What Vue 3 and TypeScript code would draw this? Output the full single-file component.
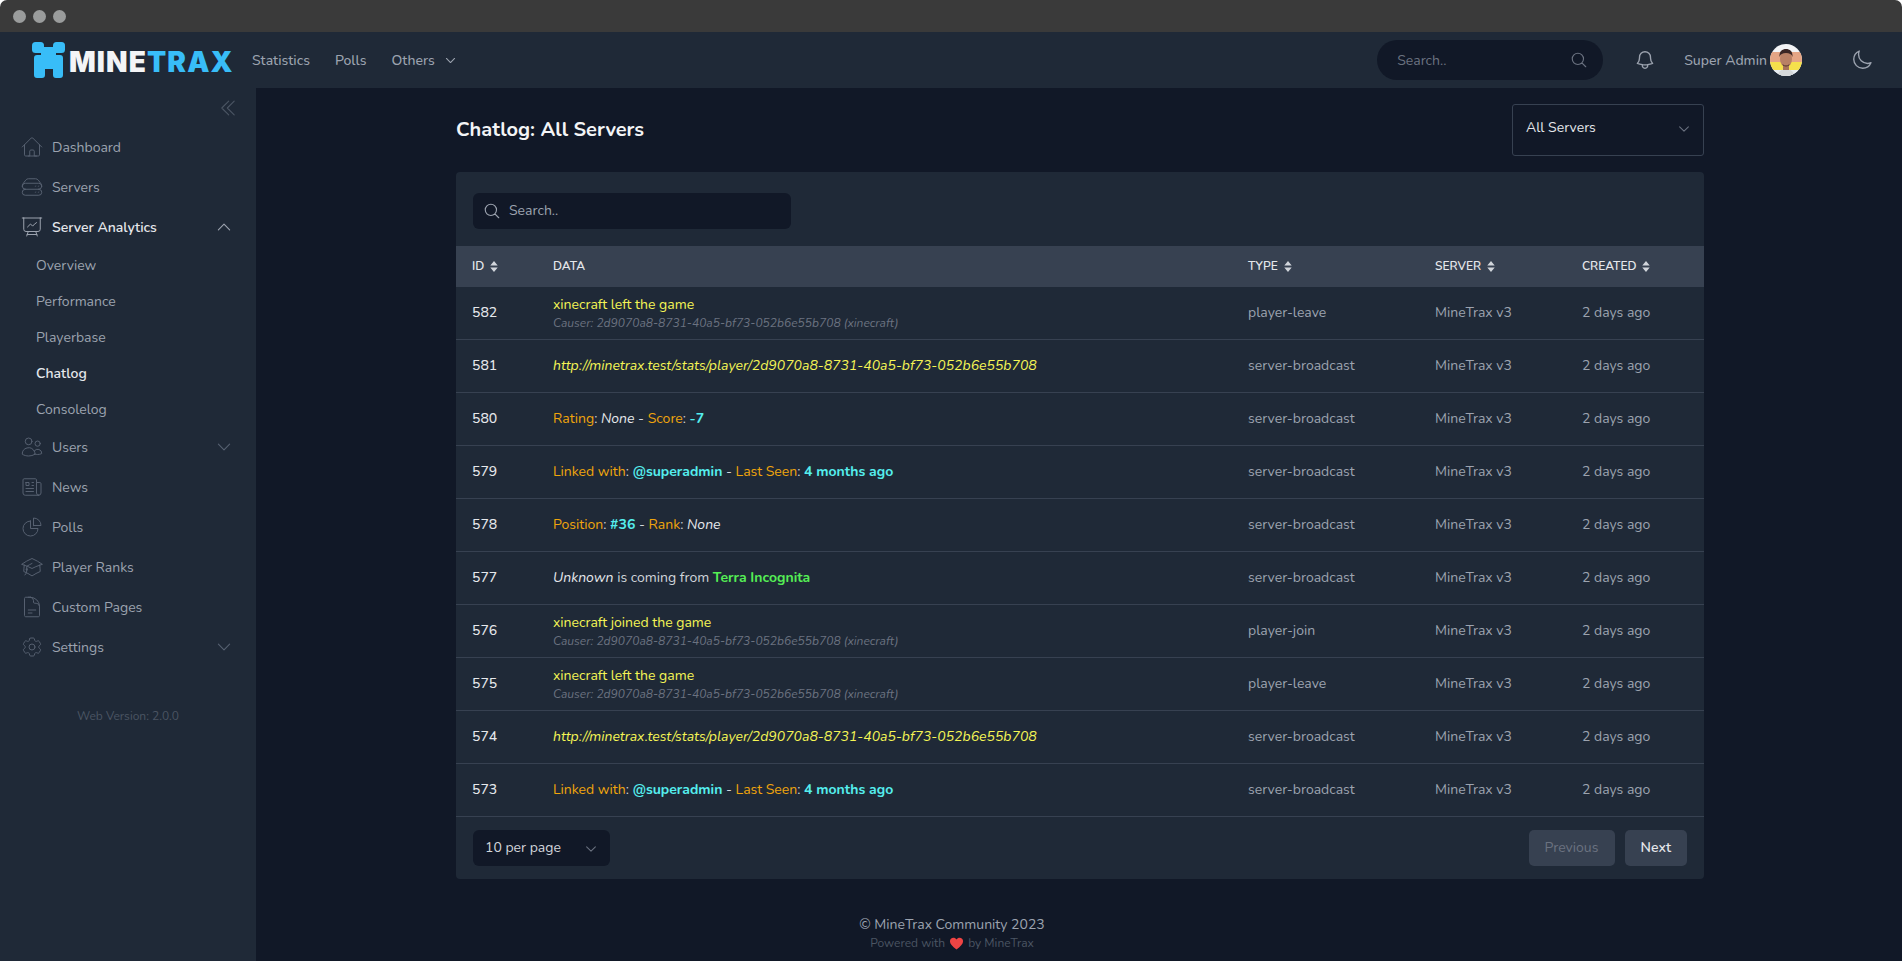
<script setup lang="ts">
interface NavItem { label: string; d: string; chevron?: 'up' | 'down'; strong?: boolean }
type Tone = 'y' | 'yi' | 'o' | 'w' | 'wi' | 'c' | 'g'
interface Seg { t: string; c: Tone }
interface Row { id: number; segs: Seg[]; causer?: boolean; type: string }

const topNav: NavItem[] = [
  { label: 'Dashboard', d: 'M2.25 12l8.954-8.955c.44-.439 1.152-.439 1.591 0L21.75 12M4.5 9.75v10.125c0 .621.504 1.125 1.125 1.125H9.75v-4.875c0-.621.504-1.125 1.125-1.125h2.25c.621 0 1.125.504 1.125 1.125V21h4.125c.621 0 1.125-.504 1.125-1.125V9.75M8.25 21h8.25' },
  { label: 'Servers', d: 'M5.25 14.25h13.5m-13.5 0a3 3 0 01-3-3m3 3a3 3 0 100 6h13.5a3 3 0 100-6m-16.5-3a3 3 0 013-3h13.5a3 3 0 013 3m-19.5 0a4.5 4.5 0 01.9-2.7L5.737 5.1a3.375 3.375 0 012.7-1.35h7.126c1.062 0 2.062.5 2.7 1.35l2.587 3.45a4.5 4.5 0 01.9 2.7m0 0a3 3 0 01-3 3m0 3h.008v.008h-.008v-.008zm0-6h.008v.008h-.008v-.008zm-3 6h.008v.008h-.008v-.008zm0-6h.008v.008h-.008v-.008z' },
  { label: 'Server Analytics', strong: true, chevron: 'up', d: 'M3.75 3v11.25A2.25 2.25 0 006 16.5h2.25M3.75 3h-1.5m1.5 0h16.5m0 0h1.5m-1.5 0v11.25A2.25 2.25 0 0118 16.5h-2.25m-7.5 0h7.5m-7.5 0l-1 3m8.5-3l1 3m0 0l.5 1.5m-.5-1.5h-9.5m0 0l-.5 1.5m.75-9l3-3 2.148 2.148A12.061 12.061 0 0116.5 7.605' },
]
const subNav = ['Overview', 'Performance', 'Playerbase', 'Chatlog', 'Consolelog']
const bottomNav: NavItem[] = [
  { label: 'Users', chevron: 'down', d: 'M15 19.128a9.38 9.38 0 002.625.372 9.337 9.337 0 004.121-.952 4.125 4.125 0 00-7.533-2.493M15 19.128v-.003c0-1.113-.285-2.16-.786-3.07M15 19.128v.106A12.318 12.318 0 018.624 21c-2.331 0-4.512-.645-6.374-1.766l-.001-.109a6.375 6.375 0 0111.964-3.07M12 6.375a3.375 3.375 0 11-6.75 0 3.375 3.375 0 016.75 0zm8.25 2.25a2.625 2.625 0 11-5.25 0 2.625 2.625 0 015.25 0z' },
  { label: 'News', d: 'M12 7.5h1.5m-1.5 3h1.5m-7.5 3h7.5m-7.5 3h7.5m3-9h3.375c.621 0 1.125.504 1.125 1.125V18a2.25 2.25 0 01-2.25 2.25M16.5 7.5V18a2.25 2.25 0 002.25 2.25M16.5 7.5V4.875c0-.621-.504-1.125-1.125-1.125H4.125C3.504 3.75 3 4.254 3 4.875V18a2.25 2.25 0 002.25 2.25h13.5M6 7.5h3v3H6v-3z' },
  { label: 'Polls', d: 'M10.5 6a7.5 7.5 0 107.5 7.5h-7.5V6zM13.5 10.5H21A7.5 7.5 0 0013.5 3v7.5z' },
  { label: 'Player Ranks', d: 'M4.26 10.147a60.436 60.436 0 00-.491 6.347A48.627 48.627 0 0112 20.904a48.627 48.627 0 018.232-4.41 60.46 60.46 0 00-.491-6.347m-15.482 0a50.57 50.57 0 00-2.658-.813A59.905 59.905 0 0112 3.493a59.902 59.902 0 0110.399 5.84c-.896.248-1.783.52-2.658.814m-15.482 0A50.697 50.697 0 0112 13.489a50.702 50.702 0 017.74-3.342M6.75 15a.75.75 0 100-1.5.75.75 0 000 1.5zm0 0v-3.675A55.378 55.378 0 0112 8.443m-7.007 11.55A5.981 5.981 0 006.75 15.75v-1.5' },
  { label: 'Custom Pages', d: 'M19.5 14.25v-2.625a3.375 3.375 0 00-3.375-3.375h-1.5A1.125 1.125 0 0113.5 7.125v-1.5a3.375 3.375 0 00-3.375-3.375H8.25m0 12.75h7.5m-7.5 3H12M10.5 2.25H5.625c-.621 0-1.125.504-1.125 1.125v17.25c0 .621.504 1.125 1.125 1.125h12.75c.621 0 1.125-.504 1.125-1.125V11.25a9 9 0 00-9-9z' },
  { label: 'Settings', chevron: 'down', d: 'M9.594 3.94c.09-.542.56-.94 1.11-.94h2.593c.55 0 1.02.398 1.11.94l.213 1.281c.063.374.313.686.645.87.074.04.147.083.22.127.324.196.72.257 1.075.124l1.217-.456a1.125 1.125 0 011.37.49l1.296 2.247a1.125 1.125 0 01-.26 1.431l-1.003.827c-.293.24-.438.613-.431.992a6.759 6.759 0 010 .255c-.007.378.138.75.43.99l1.005.828c.424.35.534.954.26 1.43l-1.298 2.247a1.125 1.125 0 01-1.369.491l-1.217-.456c-.355-.133-.75-.072-1.076.124a6.57 6.57 0 01-.22.128c-.331.183-.581.495-.644.869l-.213 1.28c-.09.543-.56.941-1.11.941h-2.594c-.55 0-1.02-.398-1.11-.94l-.213-1.281c-.062-.374-.312-.686-.644-.87a6.52 6.52 0 01-.22-.127c-.325-.196-.72-.257-1.076-.124l-1.217.456a1.125 1.125 0 01-1.369-.49l-1.297-2.247a1.125 1.125 0 01.26-1.431l1.004-.827c.292-.24.437-.613.43-.992a6.932 6.932 0 010-.255c.007-.378-.138-.75-.43-.99l-1.004-.828a1.125 1.125 0 01-.26-1.43l1.297-2.247a1.125 1.125 0 011.37-.491l1.216.456c.356.133.751.072 1.076-.124.072-.044.146-.087.22-.128.332-.183.582-.495.644-.869l.214-1.281zM15 12a3 3 0 11-6 0 3 3 0 016 0z' },
]

const url = 'http://minetrax.test/stats/player/2d9070a8-8731-40a5-bf73-052b6e55b708'
const linked: Seg[] = [
  { t: 'Linked with', c: 'o' }, { t: ': ', c: 'w' }, { t: '@superadmin', c: 'c' }, { t: ' - ', c: 'w' },
  { t: 'Last Seen', c: 'o' }, { t: ': ', c: 'w' }, { t: '4 months ago', c: 'c' },
]
const rows: Row[] = [
  { id: 582, segs: [{ t: 'xinecraft left the game', c: 'y' }], causer: true, type: 'player-leave' },
  { id: 581, segs: [{ t: url, c: 'yi' }], type: 'server-broadcast' },
  { id: 580, segs: [{ t: 'Rating', c: 'o' }, { t: ': ', c: 'w' }, { t: 'None', c: 'wi' }, { t: ' - ', c: 'w' }, { t: 'Score', c: 'o' }, { t: ': ', c: 'w' }, { t: '-7', c: 'c' }], type: 'server-broadcast' },
  { id: 579, segs: linked, type: 'server-broadcast' },
  { id: 578, segs: [{ t: 'Position', c: 'o' }, { t: ': ', c: 'w' }, { t: '#36', c: 'c' }, { t: ' - ', c: 'w' }, { t: 'Rank', c: 'o' }, { t: ': ', c: 'w' }, { t: 'None', c: 'wi' }], type: 'server-broadcast' },
  { id: 577, segs: [{ t: 'Unknown', c: 'wi' }, { t: ' is coming from ', c: 'w' }, { t: 'Terra Incognita', c: 'g' }], type: 'server-broadcast' },
  { id: 576, segs: [{ t: 'xinecraft joined the game', c: 'y' }], causer: true, type: 'player-join' },
  { id: 575, segs: [{ t: 'xinecraft left the game', c: 'y' }], causer: true, type: 'player-leave' },
  { id: 574, segs: [{ t: url, c: 'yi' }], type: 'server-broadcast' },
  { id: 573, segs: linked, type: 'server-broadcast' },
]
const heads = [
  { label: 'ID', sort: true }, { label: 'DATA', sort: false }, { label: 'TYPE', sort: true },
  { label: 'SERVER', sort: true }, { label: 'CREATED', sort: true },
]
const searchPath = 'M21 21l-5.197-5.197m0 0A7.5 7.5 0 105.196 5.196a7.5 7.5 0 0010.607 10.607z'
const chevDown = 'M19.5 8.25l-7.5 7.5-7.5-7.5'
const chevUp = 'M4.5 15.75l7.5-7.5 7.5 7.5'
</script>

<template>
  <div class="window">
    <div class="titlebar">
      <span class="dot"></span><span class="dot"></span><span class="dot"></span>
    </div>

    <header class="topbar">
      <div class="logo">
        <svg class="logo-mark" viewBox="0 0 34 36" aria-hidden="true">
          <rect x="0" y="0" width="12" height="11" rx="3.500" />
          <rect x="21" y="0" width="12" height="11" rx="3.500" />
          <rect x="9" y="5" width="15" height="10" />
          <path d="M5 13h23a3 3 0 013 3v17a3 3 0 01-3 3h-4a3 3 0 01-3-3v-6h-8v6a3 3 0 01-3 3H5a3 3 0 01-3-3V16a3 3 0 013-3z" />
        </svg>
        <span class="logo-text"><span class="logo-a">MINE</span><span class="logo-b">TRAX</span></span>
      </div>
      <nav class="topnav">
        <a>Statistics</a>
        <a>Polls</a>
        <a class="others">Others
          <svg viewBox="0 0 24 24" class="i-chev-top"><path :d="chevDown" /></svg>
        </a>
      </nav>
      <div class="top-right">
        <div class="pill">
          <span>Search..</span>
          <svg viewBox="0 0 24 24" class="i-18"><path :d="searchPath" /></svg>
        </div>
        <svg viewBox="0 0 24 24" class="i-bell"><path d="M14.857 17.082a23.848 23.848 0 005.454-1.31A8.967 8.967 0 0118 9.75v-.7V9A6 6 0 006 9v.75a8.967 8.967 0 01-2.312 6.022c1.733.64 3.56 1.085 5.455 1.31m5.714 0a24.255 24.255 0 01-5.714 0m5.714 0a3 3 0 11-5.714 0" /></svg>
        <div class="user">
          <span>Super Admin</span>
          <svg class="avatar" viewBox="0 0 32 32" aria-hidden="true">
            <defs><clipPath id="av"><circle cx="16" cy="16" r="16" /></clipPath></defs>
            <g clip-path="url(#av)">
              <rect width="32" height="32" fill="#f3f4f6" />
              <rect y="8" width="32" height="10" fill="#e5a585" />
              <rect y="18" width="32" height="8" fill="#f5e04c" />
              <rect y="26" width="32" height="6" fill="#e8eef2" />
              <path d="M8 32c0-5 4-7 8-7s8 2 8 7z" fill="#d5d8da" />
              <rect x="13" y="19" width="6" height="7" fill="#a9735a" />
              <ellipse cx="16" cy="15" rx="6" ry="8" fill="#b98065" />
              <path d="M9.500 13c-.5-6 3-8 6.500-8s7 2 6.500 8c-1-3-3-4-6.500-4s-5.500 1-6.500 4z" fill="#3a2524" />
              <path d="M13 21c2 1.500 4 1.500 6 0" stroke="#4b3028" fill="none" />
            </g>
          </svg>
        </div>
        <svg viewBox="0 0 24 24" class="i-moon"><path d="M21.752 15.002A9.718 9.718 0 0118 15.75c-5.385 0-9.75-4.365-9.75-9.75 0-1.33.266-2.597.748-3.752A9.753 9.753 0 003 11.25C3 16.635 7.365 21 12.75 21a9.753 9.753 0 009.002-5.998z" /></svg>
      </div>
    </header>

    <div class="shell">
      <aside class="sidebar">
        <div class="collapse">
          <svg viewBox="0 0 24 24"><path d="M18.75 19.5l-7.5-7.5 7.5-7.5m-6 15L5.250 12l7.500-7.500" /></svg>
        </div>
        <div v-for="n in topNav" :key="n.label" class="nav-item" :class="{ strong: n.strong }">
          <svg viewBox="0 0 24 24" class="nav-ic"><path :d="n.d" /></svg>
          <span class="nav-label">{{ n.label }}</span>
          <svg v-if="n.chevron" viewBox="0 0 24 24" class="nav-chev"><path :d="n.chevron === 'up' ? chevUp : chevDown" /></svg>
        </div>
        <div v-for="s in subNav" :key="s" class="sub-item" :class="{ active: s === 'Chatlog' }">{{ s }}</div>
        <div v-for="n in bottomNav" :key="n.label" class="nav-item">
          <svg viewBox="0 0 24 24" class="nav-ic"><path :d="n.d" /></svg>
          <span class="nav-label">{{ n.label }}</span>
          <svg v-if="n.chevron" viewBox="0 0 24 24" class="nav-chev"><path :d="chevDown" /></svg>
        </div>
        <div class="version">Web Version: 2.0.0</div>
      </aside>

      <main class="main">
        <div class="content">
          <div class="page-head">
            <h1>Chatlog: All Servers</h1>
            <div class="server-select">
              <span>All Servers</span>
              <svg viewBox="0 0 24 24" class="i-select"><path :d="chevDown" /></svg>
            </div>
          </div>

          <section class="card">
            <div class="card-top">
              <div class="search">
                <svg viewBox="0 0 24 24" class="i-18 light"><path :d="searchPath" /></svg>
                <span>Search..</span>
              </div>
            </div>
            <div class="table">
              <div class="thead">
                <div v-for="h in heads" :key="h.label" class="th">
                  {{ h.label }}
                  <svg v-if="h.sort" viewBox="0 0 10 14" class="sort"><path d="M5 1l4 5H1zM5 13l4-5H1z" /></svg>
                </div>
              </div>
              <div v-for="r in rows" :key="r.id" class="tr">
                <div class="td id">{{ r.id }}</div>
                <div class="td data">
                  <div class="msg" :class="{ tight: r.causer }">
                    <span v-for="(s, i) in r.segs" :key="i" :class="s.c">{{ s.t }}</span>
                  </div>
                  <div v-if="r.causer" class="causer">Causer: 2d9070a8-8731-40a5-bf73-052b6e55b708 (xinecraft)</div>
                </div>
                <div class="td">{{ r.type }}</div>
                <div class="td">MineTrax v3</div>
                <div class="td">2 days ago</div>
              </div>
            </div>
            <div class="card-foot">
              <div class="per-page">
                <span>10 per page</span>
                <svg viewBox="0 0 24 24" class="i-select"><path :d="chevDown" /></svg>
              </div>
              <div class="pager">
                <button class="btn disabled">Previous</button>
                <button class="btn">Next</button>
              </div>
            </div>
          </section>
        </div>
        <footer class="foot">
          <div class="foot-a">© MineTrax Community 2023</div>
          <div class="foot-b">Powered with
            <svg viewBox="0 0 24 24" class="heart"><path d="M12 21.500C5 16 1.500 12.500 1.500 8.300 1.500 5 4 2.800 7 2.800c2 0 3.900 1 5 2.900 1.100-1.900 3-2.900 5-2.900 3 0 5.500 2.200 5.500 5.500 0 4.200-3.500 7.700-10.500 13.200z" /></svg>
            by MineTrax</div>
        </footer>
      </main>
    </div>
  </div>
</template>

<style>
html, body { margin: 0; background: #ffffff; }
</style>

<style scoped>
.window {
  width: 1902px;
  height: 961px;
  overflow: hidden;
  display: flex;
  flex-direction: column;
  font-family: "Nunito", "Lato", "Noto Sans", sans-serif;
  font-size: 14px;
  color: #9ca3af;
}
svg { display: block; fill: none; stroke: currentColor; stroke-linecap: round; stroke-linejoin: round; flex: none; }

.titlebar {
  height: 32px;
  flex: none;
  background: #3a3a3a;
  border-radius: 7px 7px 0 0;
  display: flex;
  align-items: center;
  gap: 7px;
  padding-left: 13px;
}
.dot { width: 13px; height: 13px; border-radius: 50%; background: #9a9c9c; }

.topbar {
  height: 56px;
  flex: none;
  background: #1f2937;
  display: flex;
  align-items: center;
}
.logo { display: flex; align-items: center; margin-left: 32px; gap: 3px; width: 220px; }
.logo-mark { width: 34px; height: 36px; stroke: none; fill: #38bdf8; }
.logo-text { font-family: "Inter", sans-serif; font-weight: 900; font-size: 28px; line-height: 36px; letter-spacing: 1.1px; margin-top: 3px; white-space: nowrap; }
.logo-a { color: #f3f4f6; }
.logo-b { color: #38bdf8; }
.topnav { display: flex; align-items: center; gap: 25px; font-weight: 500; }
.others { display: flex; align-items: center; gap: 9px; }
.i-chev-top { width: 13px; height: 13px; stroke-width: 2; }
.top-right { margin-left: auto; display: flex; align-items: center; }
.pill {
  width: 226px;
  height: 40px;
  box-sizing: border-box;
  border-radius: 20px;
  background: #111827;
  color: #6b7280;
  display: flex;
  align-items: center;
  justify-content: space-between;
  padding: 0 15px 0 20px;
}
.i-18 { width: 18px; height: 18px; stroke-width: 1.5; }
.i-18.light { color: #9ca3af; }
.i-bell { width: 22px; height: 22px; stroke-width: 1.5; margin-left: 31px; color: #9ca3af; }
.user { display: flex; align-items: center; gap: 3px; margin-left: 28px; font-weight: 500; }
.avatar { width: 32px; height: 32px; stroke: none; }
.i-moon { width: 22px; height: 22px; stroke-width: 1.5; margin-left: 49px; margin-right: 29px; color: #9ca3af; }

.shell { flex: 1; display: flex; min-height: 0; }
.sidebar { width: 256px; flex: none; background: #1f2937; }
.collapse { height: 39px; display: flex; justify-content: flex-end; align-items: center; padding-right: 17px; box-sizing: border-box; color: #4b5563; }
.collapse svg { width: 22px; height: 22px; stroke-width: 1.2; }
.nav-item { height: 40px; display: flex; align-items: center; padding-left: 20px; padding-right: 24px; color: #9ca3af; box-sizing: border-box; }
.nav-item.strong { color: #e5e7eb; font-weight: 600; }
.nav-ic { width: 24px; height: 24px; stroke-width: 1; color: #566070; margin-right: 8px; }
.nav-item.strong .nav-ic { color: #9ca3af; }
.nav-label { flex: 1; }
.nav-chev { width: 18px; height: 18px; stroke-width: 1.5; color: #566070; margin-right: -1px; }
.nav-item.strong .nav-chev { color: #9ca3af; }
.sub-item { height: 36px; line-height: 38px; padding-left: 36px; color: #9ca3af; }
.sub-item.active { color: #e5e7eb; font-weight: 600; }
.version { margin-top: 41px; text-align: center; font-size: 12px; line-height: 16px; color: #4b5563; }

.main { flex: 1; background: #111827; min-width: 0; }
.content { width: 1248px; margin-left: 200px; }
.page-head { display: flex; justify-content: space-between; align-items: flex-start; padding-top: 16px; height: 84px; box-sizing: border-box; }
.page-head h1 { margin: 0; font-size: 20px; font-weight: 700; line-height: 52px; color: #f3f4f6; }
.server-select {
  width: 192px;
  height: 52px;
  box-sizing: border-box;
  border: 1px solid #374151;
  border-radius: 3px;
  color: #e5e7eb;
  display: flex;
  justify-content: space-between;
  padding: 13px 12px 0 13px;
  line-height: 20px;
}
.i-select { width: 14px; height: 14px; stroke-width: 1.8; color: #6b7280; margin-top: 4px; }

.card { background: #1f2937; border-radius: 4px; }
.card-top { padding: 21px 0 17px 17px; }
.search {
  width: 318px;
  height: 36px;
  box-sizing: border-box;
  background: #111827;
  border-radius: 6px;
  display: flex;
  align-items: center;
  gap: 8px;
  padding: 0 0 1px 10px;
  color: #9ca3af;
}
.thead, .tr { display: grid; grid-template-columns: 81px 695px 187px 147px 138px; }
.thead { height: 41px; background: #374151; }
.th { display: flex; align-items: center; gap: 5px; padding: 0 0 1px 16px; font-size: 12px; font-weight: 600; color: #e5e7eb; }
.sort { width: 10px; height: 13px; fill: #d1d5db; stroke: none; }
.tr { height: 53px; box-sizing: border-box; border-bottom: 1px solid #374151; }
.td { padding: 0 0 1px 16px; display: flex; flex-direction: column; justify-content: center; color: #9ca3af; }
.td.data { padding-bottom: 0; }
.td.id { color: #e5e7eb; font-weight: 500; }
.msg { line-height: 20px; white-space: pre-wrap; font-weight: 400; }
.msg.tight { line-height: 18px; margin-top: 1px; }
.causer { font-size: 12px; line-height: 16px; font-style: italic; color: #6b7280; margin-top: 1px; }
.y { color: #f5f555; }
.yi { color: #f5f555; font-style: italic; }
.o { color: #efa50c; }
.w { color: #d1d5db; }
.wi { color: #e5e7eb; font-style: italic; }
.c { color: #55eeee; font-weight: 700; }
.g { color: #55ee55; font-weight: 700; }

.card-foot { height: 62px; box-sizing: border-box; padding: 13px 17px 0 17px; display: flex; justify-content: space-between; align-items: flex-start; }
.per-page {
  width: 137px;
  height: 36px;
  box-sizing: border-box;
  background: #111827;
  border-radius: 6px;
  color: #d1d5db;
  display: flex;
  justify-content: space-between;
  align-items: center;
  padding: 0 12px 1px 12px;
}
.per-page .i-select { margin-top: 2px; }
.pager { display: flex; gap: 10px; }
.btn {
  height: 36px;
  border: 0;
  border-radius: 5px;
  background: #374151;
  color: #e5e7eb;
  font: inherit;
  font-weight: 600;
  padding: 0 16px 1px;
  min-width: 62px;
}
.btn.disabled { width: 86px; color: #6b7280; font-weight: 400; }

.foot { text-align: center; padding-right: 254px; margin-top: 36px; }
.foot-a { line-height: 20px; color: #9ca3af; }
.foot-b { font-size: 12px; line-height: 16px; color: #4b5563; display: flex; justify-content: center; align-items: center; gap: 4px; }
.heart { width: 15px; height: 15px; fill: #ef4444; stroke: none; }
</style>
